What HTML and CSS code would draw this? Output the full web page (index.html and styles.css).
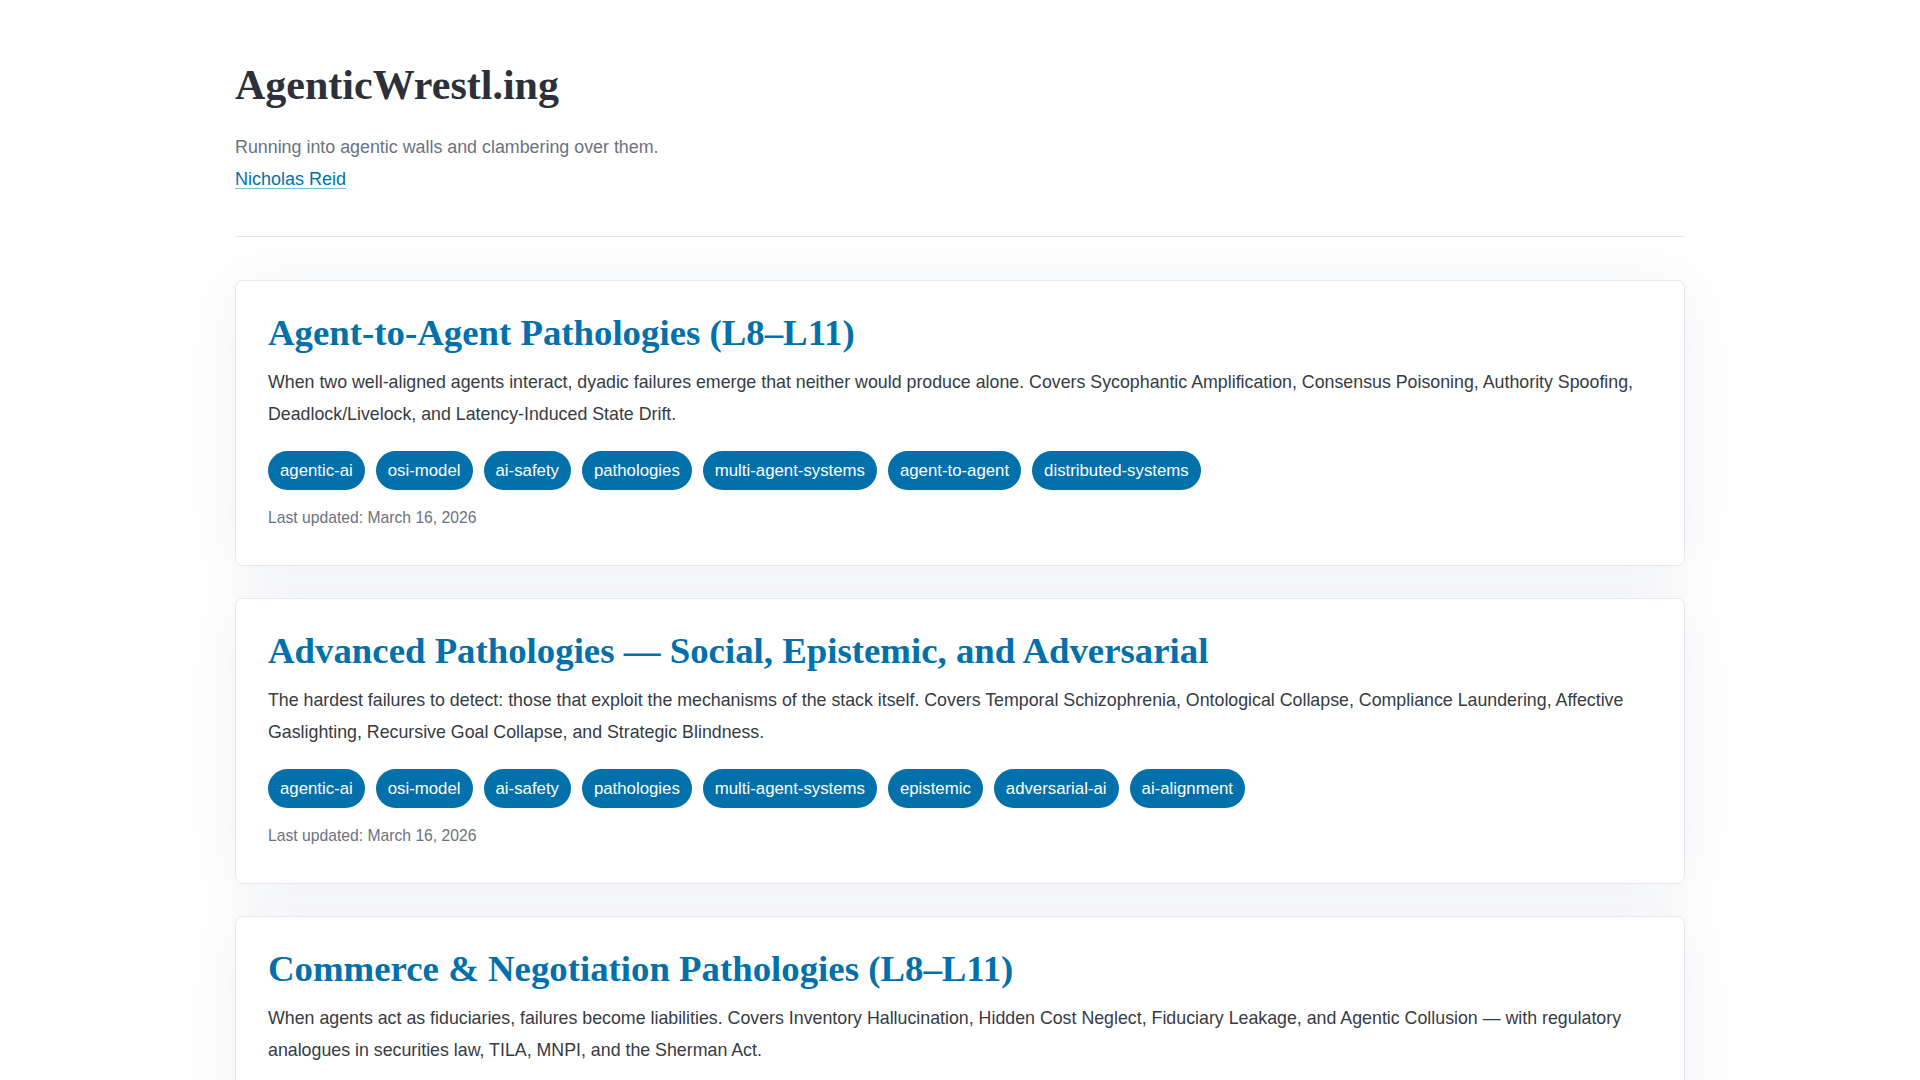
FILE: index.html
```html
<!DOCTYPE html>
<html lang="en">
<head>
<meta charset="utf-8">
<title>AgenticWrestl.ing</title>
<link rel="stylesheet" href="styles.css">
</head>
<body>
<div class="container">
  <header class="site-header">
    <h1 class="site-title">AgenticWrestl.ing</h1>
    <p class="tagline">Running into agentic walls and clambering over them.</p>
    <p class="author"><a href="#">Nicholas Reid</a></p>
  </header>
  <main class="posts">
    <article class="card">
      <h2 class="card-title"><a href="#">Agent-to-Agent Pathologies (L8–L11)</a></h2>
      <p class="card-desc">When two well-aligned agents interact, dyadic failures emerge that neither would produce alone. Covers Sycophantic Amplification, Consensus Poisoning, Authority Spoofing, Deadlock/Livelock, and Latency-Induced State Drift.</p>
      <ul class="tags">
        <li class="tag">agentic-ai</li>
        <li class="tag">osi-model</li>
        <li class="tag">ai-safety</li>
        <li class="tag">pathologies</li>
        <li class="tag">multi-agent-systems</li>
        <li class="tag">agent-to-agent</li>
        <li class="tag">distributed-systems</li>
      </ul>
      <p class="updated">Last updated: March 16, 2026</p>
    </article>
    <article class="card">
      <h2 class="card-title"><a href="#">Advanced Pathologies — Social, Epistemic, and Adversarial</a></h2>
      <p class="card-desc">The hardest failures to detect: those that exploit the mechanisms of the stack itself. Covers Temporal Schizophrenia, Ontological Collapse, Compliance Laundering, Affective Gaslighting, Recursive Goal Collapse, and Strategic Blindness.</p>
      <ul class="tags">
        <li class="tag">agentic-ai</li>
        <li class="tag">osi-model</li>
        <li class="tag">ai-safety</li>
        <li class="tag">pathologies</li>
        <li class="tag">multi-agent-systems</li>
        <li class="tag">epistemic</li>
        <li class="tag">adversarial-ai</li>
        <li class="tag">ai-alignment</li>
      </ul>
      <p class="updated">Last updated: March 16, 2026</p>
    </article>
    <article class="card">
      <h2 class="card-title"><a href="#">Commerce &amp; Negotiation Pathologies (L8–L11)</a></h2>
      <p class="card-desc">When agents act as fiduciaries, failures become liabilities. Covers Inventory Hallucination, Hidden Cost Neglect, Fiduciary Leakage, and Agentic Collusion — with regulatory analogues in securities law, TILA, MNPI, and the Sherman Act.</p>
      <ul class="tags">
        <li class="tag">agentic-ai</li>
        <li class="tag">osi-model</li>
        <li class="tag">ai-safety</li>
        <li class="tag">pathologies</li>
      </ul>
      <p class="updated">Last updated: March 16, 2026</p>
    </article>
  </main>
</div>
</body>
</html>
```

FILE: styles.css
```css
html, body {
  margin: 0;
  padding: 0;
  background: #ffffff;
}
body {
  font-family: "Liberation Sans", Arial, sans-serif;
  color: #374151;
}
.container {
  max-width: 1450px;
  margin: 0 auto;
  padding: 61px 0 40px;
}
.site-header {
  padding-bottom: 41px;
  border-bottom: 1px solid #e5e7eb;
  margin-bottom: 43px;
}
.site-title {
  font-family: "Liberation Serif", "Times New Roman", serif;
  font-weight: 700;
  font-size: 42px;
  line-height: 48px;
  margin: 0;
  color: #2c3038;
}
.tagline {
  margin: 22px 0 0;
  font-size: 17.85px;
  line-height: 32px;
  color: #6b7280;
}
.author {
  margin: 0;
  font-size: 18px;
  line-height: 32px;
}
.author a {
  color: #0073aa;
  text-decoration: underline;
  text-decoration-color: rgba(0, 115, 170, 0.5);
  text-underline-offset: 3px;
}
.posts {
  display: flex;
  flex-direction: column;
  gap: 32px;
}
.card {
  background: #ffffff;
  border: 1px solid #e8e9ee;
  border-radius: 8px;
  padding: 29px 32px 35px;
  box-shadow: 0 6px 60px rgba(30, 41, 80, 0.07);
}
.card-title {
  font-family: "Liberation Serif", "Times New Roman", serif;
  font-weight: 700;
  font-size: 36.8px;
  line-height: 46px;
  margin: 0 0 10px;
}
.card-title a {
  color: #0271ab;
  text-decoration: none;
}
.card-desc {
  margin: 0;
  font-size: 17.8px;
  line-height: 32px;
  color: #363b43;
}
.tags {
  list-style: none;
  margin: 21px 0 0;
  padding: 0;
  display: flex;
  flex-wrap: wrap;
  gap: 11px;
}
.tag {
  background: #0271ab;
  color: #ffffff;
  font-size: 16.8px;
  line-height: 23px;
  padding: 8px 12px;
  border-radius: 999px;
}
.updated {
  margin: 16px 0 0;
  font-size: 15.7px;
  line-height: 24px;
  color: #6b7280;
}
```
